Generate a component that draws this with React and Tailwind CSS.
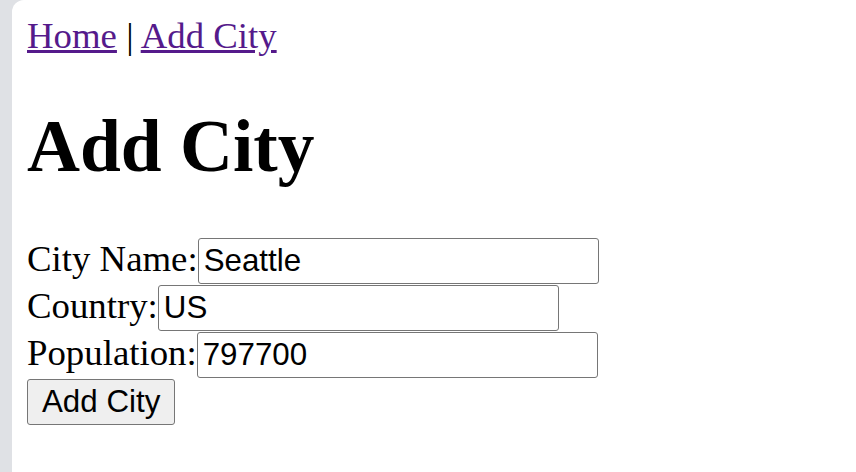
export default function App() {
  const fields = [
    { label: 'City Name:', value: 'Seattle' },
    { label: 'Country:', value: 'US' },
    { label: 'Population:', value: '797700' },
  ];

  return (
    <div className="flex h-[472px] w-[856px] bg-[#dfe1e5]">
      <div className="ml-[12px] flex-1 rounded-tl-[12px] bg-white pl-[15px] pt-[15px] font-['Liberation_Serif',serif] text-black">
        {/* nav */}
        <div className="text-[36.8px] leading-[41px]">
          <a href="#" className="text-[#551a8b] underline">Home</a>
          {' | '}
          <a href="#" className="text-[#551a8b] underline">Add City</a>
        </div>

        <h1 className="mt-[49px] text-[73.4px] font-bold leading-[83px]">Add City</h1>

        <form className="mt-[50px] flex flex-col gap-[1px]" onSubmit={(e) => e.preventDefault()}>
          {fields.map((f) => (
            <div key={f.label} className="flex items-baseline text-[36.8px] leading-[41px]">
              <label>{f.label}</label>
              <input
                type="text"
                defaultValue={f.value}
                className="h-[46px] w-[401px] rounded-[3px] border border-[#767676] px-[5px] font-['Liberation_Sans',Arial,sans-serif] text-[31.3px] text-black outline-none"
              />
            </div>
          ))}
          <div>
            <button
              type="submit"
              className="h-[46px] rounded-[3px] border border-[#767676] bg-[#efefef] px-[14px] font-['Liberation_Sans',Arial,sans-serif] text-[31.3px] leading-[36px] text-black"
            >
              Add City
            </button>
          </div>
        </form>
      </div>
    </div>
  );
}
